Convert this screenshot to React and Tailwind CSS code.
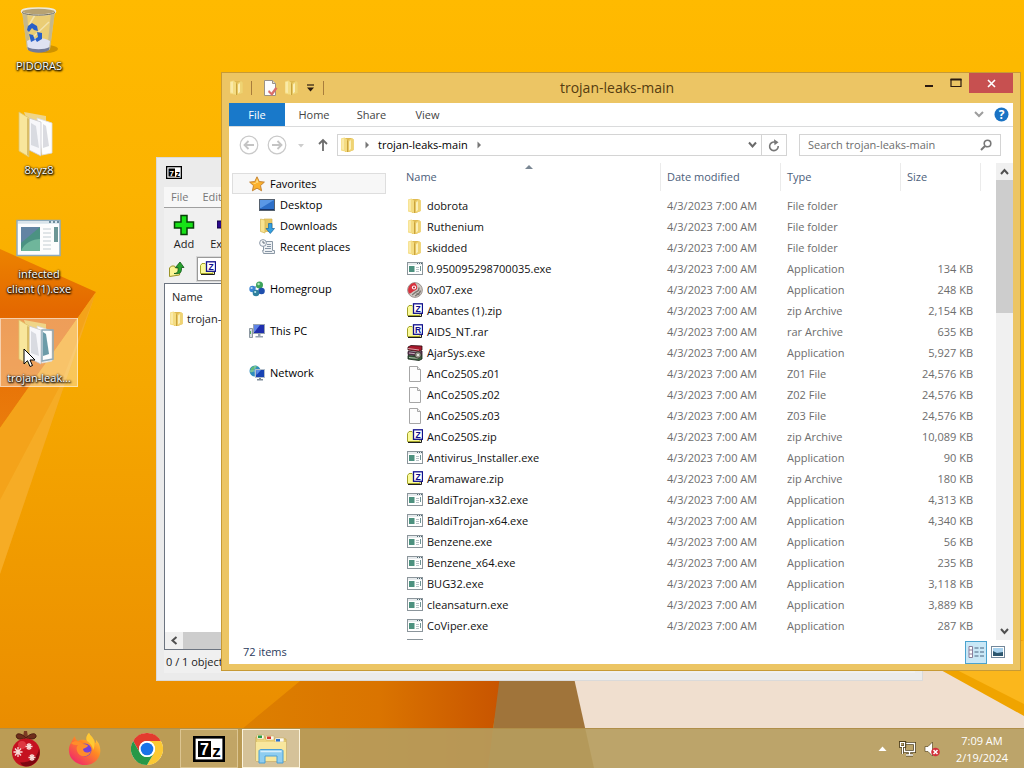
import { useState } from 'react';
import clsx from 'clsx';

const DATE = '4/3/2023 7:00 AM';

const files = [
    { name: 'dobrota', icon: 'folder', type: 'File folder', size: '' },
    { name: 'Ruthenium', icon: 'folder', type: 'File folder', size: '' },
    { name: 'skidded', icon: 'folder', type: 'File folder', size: '' },
    { name: '0.950095298700035.exe', icon: 'exe', type: 'Application', size: '134 KB' },
    { name: '0x07.exe', icon: 'disc', type: 'Application', size: '248 KB' },
    { name: 'Abantes (1).zip', icon: 'zip', type: 'zip Archive', size: '2,154 KB' },
    { name: 'AIDS_NT.rar', icon: 'rar', type: 'rar Archive', size: '635 KB' },
    { name: 'AjarSys.exe', icon: 'books', type: 'Application', size: '5,927 KB' },
    { name: 'AnCo250S.z01', icon: 'file', type: 'Z01 File', size: '24,576 KB' },
    { name: 'AnCo250S.z02', icon: 'file', type: 'Z02 File', size: '24,576 KB' },
    { name: 'AnCo250S.z03', icon: 'file', type: 'Z03 File', size: '24,576 KB' },
    { name: 'AnCo250S.zip', icon: 'zip', type: 'zip Archive', size: '10,089 KB' },
    { name: 'Antivirus_Installer.exe', icon: 'exe', type: 'Application', size: '90 KB' },
    { name: 'Aramaware.zip', icon: 'zip', type: 'zip Archive', size: '180 KB' },
    { name: 'BaldiTrojan-x32.exe', icon: 'exe', type: 'Application', size: '4,313 KB' },
    { name: 'BaldiTrojan-x64.exe', icon: 'exe', type: 'Application', size: '4,340 KB' },
    { name: 'Benzene.exe', icon: 'exe', type: 'Application', size: '56 KB' },
    { name: 'Benzene_x64.exe', icon: 'exe', type: 'Application', size: '235 KB' },
    { name: 'BUG32.exe', icon: 'exe', type: 'Application', size: '3,118 KB' },
    { name: 'cleansaturn.exe', icon: 'exe', type: 'Application', size: '3,889 KB' },
    { name: 'CoViper.exe', icon: 'exe', type: 'Application', size: '287 KB' },
];

/* ---------- small icons ---------- */

function FolderIcon() {
    return (
        <svg width="16" height="16" viewBox="0 0 16 16" className="shrink-0">
            <path d="M5 1h6l2.500 1.500V13L9 15H5z" fill="#dfba52" />
            <path d="M1 1.500 4.500.5 7 2.500V15l-6-1.500z" fill="#f4dc82" />
            <path d="M1.500 2 4 1.500V13l-2.500-.5z" fill="#faeaa8" />
            <path d="M8.500 3 12 1l1.800 1.500V13L8.500 15z" fill="#efd373" />
            <path d="M9 4.500 11 3v9l-2 1.500z" fill="#fbefb8" />
            <path d="M7.500 3.500V15" stroke="#c39c38" strokeWidth=".8" />
        </svg>
    );
}

function ExeIcon() {
    return (
        <svg width="16" height="16" viewBox="0 0 16 16" className="shrink-0">
            <rect x=".5" y="1.500" width="15" height="12" fill="#fff" stroke="#8b959b" />
            <path d="M1 3h14" stroke="#cfd8dc" />
            <path d="M10 2.500h1M12 2.500h1M14 2.500h1" stroke="#4f6872" />
            <rect x="2" y="5" width="5.500" height="6" fill="#4d917f" />
            <path d="M9 6.500h3M9 8.500h3M9 10.500h3" stroke="#b9c4c8" />
            <path d="M13.500 5v5" stroke="#6f9494" />
        </svg>
    );
}

function DiscIcon() {
    return (
        <svg width="16" height="16" viewBox="0 0 16 16" className="shrink-0">
            <circle cx="8" cy="8" r="7.400" fill="#cfc8c2" stroke="#8a827d" strokeWidth=".8" />
            <path d="M8 .8a7.200 7.200 0 0 0-6 10.700C4 12 5.500 9.500 8 8.500S11.500 5 8 .8z" fill="#d8323e" />
            <circle cx="7" cy="5.500" r="2.100" fill="#fff" />
            <circle cx="7" cy="5.500" r="1" fill="#b11c2c" />
            <path d="M5 13c2-1 3-3 5-3.500s2-2.500 2-4M8 14c2-1 5-3 5.500-5.500M9.500 11.500l3 1.500" stroke="#7c7671" strokeWidth="1.300" fill="none" />
        </svg>
    );
}

function ArchiveIcon({ letter }) {
    return (
        <svg width="16" height="16" viewBox="0 0 16 16" className="shrink-0">
            <path d="M.5 12.500v-8L2 2.500h3l1 1h7v9z" fill="#fbfb9b" stroke="#a3a32a" />
            <path d="M1 13.500h13.500V10" stroke="#1b1b1b" fill="none" />
            <rect x="6.500" y=".8" width="9" height="9.500" fill="#fff" stroke="#10108c" strokeWidth="1.300" />
            <text x="11" y="8.700" fontSize="8.500" fontWeight="700" textAnchor="middle" fill="#10108c" fontFamily="Liberation Sans, sans-serif">
                {letter}
            </text>
        </svg>
    );
}

function BooksIcon() {
    return (
        <svg width="16" height="16" viewBox="0 0 16 16" className="shrink-0">
            <path d="m1 2 3-1.500 11 .5v4l-3 1.500L1 5z" fill="#a7192c" stroke="#2b0a10" strokeWidth=".8" />
            <path d="m1 6.500 11 1 3-1.500v4l-3 1L1 9.500z" fill="#6e3a60" stroke="#21101d" strokeWidth=".8" />
            <path d="m1 10.500 11 1 3-1.500v4l-3 1.500L1 14z" fill="#3a6740" stroke="#101d12" strokeWidth=".8" />
            <path d="M1 3.500 12 5M2 8l9 1M2 12.500l9 .8" stroke="#e9dfdf" strokeWidth=".7" />
            <circle cx="11" cy="10" r="3.200" fill="#9a9a8e" stroke="#2e2e28" strokeWidth=".8" />
            <circle cx="11" cy="10" r="1" fill="#fff" />
        </svg>
    );
}

function FileIcon() {
    return (
        <svg width="16" height="16" viewBox="0 0 16 16" className="shrink-0">
            <path d="M2.500.5h8l3 3v12h-11z" fill="#fdfdfd" stroke="#a6a6a6" />
            <path d="M10.500.5v3h3" fill="#eee" stroke="#a6a6a6" />
        </svg>
    );
}

function RowIcon({ kind }) {
    if (kind === 'folder') return <FolderIcon />;
    if (kind === 'disc') return <DiscIcon />;
    if (kind === 'zip') return <ArchiveIcon letter="Z" />;
    if (kind === 'rar') return <ArchiveIcon letter="R" />;
    if (kind === 'books') return <BooksIcon />;
    if (kind === 'file') return <FileIcon />;
    return <ExeIcon />;
}

function StarIcon() {
    return (
        <svg width="16" height="16" viewBox="0 0 16 16" className="shrink-0">
            <path
                d="m8 .8 2.200 4.700 5.200.6-3.900 3.500 1.100 5.200L8 12.200l-4.600 2.600 1.100-5.200L.6 6.100l5.200-.6z"
                fill="#fbb02c"
                stroke="#c07d2d"
                strokeWidth=".9"
            />
            <path d="m8 2.500 1.500 4L3 7l3.500 1" fill="#ffe08a" />
        </svg>
    );
}

function DesktopIcon() {
    return (
        <svg width="16" height="16" viewBox="0 0 16 16" className="shrink-0">
            <rect x=".5" y="2.500" width="15" height="11" fill="#2d6fc9" stroke="#56616e" />
            <path d="M1 3h14L2 11H1z" fill="#5a98e6" />
            <path d="M1 12.500h14" stroke="#16356e" />
        </svg>
    );
}

function DownloadsIcon() {
    return (
        <svg width="16" height="16" viewBox="0 0 16 16" className="shrink-0">
            <path d="M5 1h8v12.500H5z" fill="#e6c665" stroke="#d6b450" strokeWidth=".7" />
            <path d="M1.500 1 6 2v13l-4.500-1.500z" fill="#f8e291" stroke="#d6b450" strokeWidth=".7" />
            <path d="M9.500 5.500h3.500v5h2.500l-4.200 5-4.300-5h2.500z" fill="#35a0e0" stroke="#1565a5" strokeWidth=".7" />
        </svg>
    );
}

function RecentIcon() {
    return (
        <svg width="16" height="16" viewBox="0 0 16 16" className="shrink-0">
            <path d="M4.500 2.500h9v9h2v3h-11l-1-3h1z" fill="#eef1f4" stroke="#8b98a5" />
            <path d="M8 5.500h4M8 7.500h4M6 9.500h6M6 12.500h7" stroke="#8896a5" />
            <circle cx="4" cy="4" r="3.400" fill="#f5f7f9" stroke="#8290a0" strokeWidth=".9" />
            <path d="M4 2v2h2" stroke="#566370" fill="none" strokeWidth=".9" />
        </svg>
    );
}

function HomegroupIcon() {
    return (
        <svg width="16" height="16" viewBox="0 0 16 16" className="shrink-0">
            <path d="M4 7.500 10 4l3 7.500-7 1z" fill="none" stroke="#91a6b5" strokeWidth="1.500" />
            <circle cx="3.500" cy="8" r="3.200" fill="#3b84d4" />
            <circle cx="10.500" cy="4" r="3.500" fill="#3da35b" />
            <circle cx="12.500" cy="10" r="3.300" fill="#1f4fad" />
            <circle cx="7" cy="12" r="3.300" fill="#2e7f9e" />
            <circle cx="9.600" cy="3" r="1.200" fill="#b0e6bd" />
            <circle cx="2.600" cy="7" r="1.100" fill="#b5d8f7" />
            <circle cx="6.200" cy="11" r="1.100" fill="#bfe6ee" />
        </svg>
    );
}

function PcIcon() {
    return (
        <svg width="16" height="16" viewBox="0 0 16 16" className="shrink-0">
            <path d="M.5 5.500h3v9h-3z" fill="#d6dce2" stroke="#74808d" strokeWidth=".8" />
            <path d="M1.500 8v3" stroke="#4faa5a" />
            <rect x="4.500" y="1.500" width="11" height="9" fill="#1f2fae" stroke="#9aa5b1" />
            <path d="M5 2h6L5.500 9H5z" fill="#5f84e6" />
            <path d="M9 11h2.500v2H14v1.500H6.500V13H9z" fill="#96a2af" />
        </svg>
    );
}

function NetworkIcon() {
    return (
        <svg width="16" height="16" viewBox="0 0 16 16" className="shrink-0">
            <circle cx="6" cy="6" r="5.500" fill="#2f8dbd" />
            <path d="M2 3c2-2 5-2.500 6-2 0 2-3 2-3 4S2 8 1 7z" fill="#63bb79" />
            <path d="M1 6h10M6 .5v11" stroke="#bfe2f3" strokeWidth=".5" />
            <rect x="6.500" y="4.500" width="9" height="8" fill="#1843b3" stroke="#b3bfcb" />
            <path d="M7 5h5l-4.500 5z" fill="#5d8ce6" />
            <path d="M10 13h2v1h2v1.500H8V14h2z" fill="#7f8c99" />
        </svg>
    );
}

function SevenZipLogo({ className }) {
    return (
        <svg viewBox="0 0 32 26" className={className}>
            <rect x="1.300" y="1.300" width="29.400" height="23.400" fill="#fff" stroke="#000" strokeWidth="2.600" />
            <rect x="5" y="5" width="13" height="16" fill="#000" />
            <text x="11.500" y="19" fontSize="16" fontWeight="700" textAnchor="middle" fill="#fff" fontFamily="Liberation Sans, sans-serif">
                7
            </text>
            <text x="23.500" y="21" fontSize="17" fontWeight="700" textAnchor="middle" fill="#000" fontFamily="Liberation Sans, sans-serif">
                z
            </text>
        </svg>
    );
}

/* ---------- desktop icons ---------- */

function RecycleBin() {
    return (
        <svg width="48" height="48" viewBox="0 0 48 48">
            <ellipse cx="31" cy="43" rx="12" ry="4" fill="#9d6b00" opacity=".5" />
            <path d="m7 5 5 38c4 4 20 4 23 0l5-38z" fill="#e6d08a" opacity=".85" />
            <path d="m7 5 5 38 3 2L12 6zM40 5l-5 38-3 2 4-38z" fill="#c2b68d" opacity=".9" />
            <path d="M34 16 16 33M20 9l-6 10" stroke="#f7ecc4" strokeWidth="1.500" opacity=".7" />
            <path d="M12 35c6-4 17-4 23 0l-1 8c-5 4-17 4-21 0z" fill="#dfe2f2" />
            <path d="M12.500 41c5 3 17 3 22 0l-.5 3c-5 3.500-16 3.500-21 0z" fill="#737a96" />
            <ellipse cx="23.500" cy="5.500" rx="17" ry="3.400" fill="#b7a272" stroke="#eceadf" strokeWidth="1.500" />
            <path d="M7 6.500c4 3.500 29 3.500 33 0" stroke="#6f6855" fill="none" />
            <path d="m13 20 4-3 5 3 1 5-4-1-2-2-3 4-2-2zM22 26l5 1 0 6-5 3-2-3 3-2zM14 28l4 1 2 5-4 2z" fill="#2860c8" />
        </svg>
    );
}

function BigFolder({ withWindow }) {
    return (
        <svg width="48" height="48" viewBox="0 0 48 48">
            <path d="m9 2 22 4v9l-17 2z" fill="#efd588" />
            <path d="m22 8 15 5v30l-10 2z" fill="#fdfdfd" stroke="#dcdcdc" strokeWidth=".8" />
            <path d="m14 8 12 4v34l-12-6z" fill="#f7f7fa" stroke="#c9c9cf" strokeWidth=".8" />
            <path d="m16 13 5 3 3 22-8-3z" fill="#d9dbe1" />
            <path d="m28 14 3 2 3 20-6 2z" fill={withWindow ? '#6c9ba8' : '#dadbe0'} />
            {withWindow && <path d="M27 12h11v29l-11 2z" fill="none" stroke="#90aab9" strokeWidth="1.500" />}
            <path d="M4 2 14 8v39L4 41z" fill="#f8e69c" stroke="#dfc36a" strokeWidth=".8" />
            <path d="m12 8 2 1v37l-2-1z" fill="#d9bd68" />
        </svg>
    );
}

function BigExe() {
    return (
        <svg width="48" height="48" viewBox="0 0 48 48">
            <rect x="2" y="6.500" width="43" height="35" fill="#fdfdfd" stroke="#8eabbd" strokeWidth="1.500" />
            <path d="M3 8.500h41" stroke="#d8e4eb" strokeWidth="2.500" />
            <path d="M34 8h2M38 8h2M42 8h2" stroke="#4d7183" strokeWidth="1.500" />
            <rect x="6" y="13" width="19" height="24" fill="#4b9282" />
            <path d="M6 13h19L6 29z" fill="#6284a3" />
            <path d="M6 37c3-8 12-12 19-12v12z" fill="#6fb69b" />
            <path d="M28 15h8M28 19h8M28 23h8M28 27h8M28 31h8M28 35h8" stroke="#c3cdd2" />
            <path d="M39 13h4v15h-4z" fill="#6c9695" />
        </svg>
    );
}

const shortcuts = [
    { label: 'PIDORAS', icon: <RecycleBin /> },
    { label: '8xyz8', icon: <BigFolder /> },
    { label: 'infected client (1).exe', icon: <BigExe /> },
    { label: 'trojan-leak...', icon: <BigFolder withWindow />, selected: true },
];

function Shortcuts() {
    return (
        <div className="absolute top-1.5 left-0 grid auto-rows-[104px]">
            {shortcuts.map((item) => (
                <div key={item.label}>
                    <button
                        className={clsx(
                            'flex w-[78px] flex-col items-center gap-1 border pb-px',
                            item.selected ? 'border-white/50 bg-white/35' : 'border-transparent',
                        )}
                    >
                        <span className="-mt-px h-12">{item.icon}</span>
                        <span className="px-1 text-center text-[11px] leading-[15px] text-white [text-shadow:1px_1px_2px_#000,0_1px_2px_#000,0_0_2px_#000]">
                            {item.label}
                        </span>
                    </button>
                </div>
            ))}
        </div>
    );
}

function Wallpaper() {
    return (
        <svg viewBox="0 0 1024 768" preserveAspectRatio="none" className="absolute inset-0 h-full w-full">
            <defs>
                <linearGradient id="sky" x1="0" y1="0" x2="0" y2="1">
                    <stop offset="0" stopColor="#ffba00" />
                    <stop offset=".25" stopColor="#fcb300" />
                    <stop offset=".5" stopColor="#f6a800" />
                    <stop offset=".85" stopColor="#ed9300" />
                    <stop offset="1" stopColor="#e88900" />
                </linearGradient>
                <linearGradient id="fold" x1="0" y1="0" x2="0" y2="1">
                    <stop offset="0" stopColor="#ec8300" />
                    <stop offset=".35" stopColor="#e46800" />
                    <stop offset="1" stopColor="#ea7c0c" />
                </linearGradient>
                <linearGradient id="shade" x1="0" y1="0" x2="1" y2="0">
                    <stop offset="0" stopColor="#de8300" />
                    <stop offset=".6" stopColor="#da7400" />
                    <stop offset="1" stopColor="#c85400" />
                </linearGradient>
            </defs>
            <rect width="1024" height="768" fill="url(#sky)" />
            <path d="M0 249 96 292 0 428z" fill="url(#fold)" />
            <path d="M96 292 0 428v146z" fill="#f4a31a" />
            <path d="M96 292 60 386 0 500v74z" fill="#f7b32d" opacity=".6" />
            <path d="M300 681h202l-9 47-3 40H195z" fill="url(#shade)" />
            <path d="M502 660h70l22 108H488z" fill="#a0743a" />
            <path d="M570 660h360l94 55v53H594z" fill="#f0dfcf" />
            <path d="m930 664 94 52V660z" fill="#f0a400" />
            <path d="m945 664 79 40V640z" fill="#fbb71c" />
            <path d="M1010 640h14V60h-14z" fill="#fcb900" />
        </svg>
    );
}

/* ---------- 7-Zip window ---------- */

function SevenZipWindow() {
    return (
        <section className="absolute top-[157px] right-[101px] bottom-[47px] left-[156px] flex flex-col border border-[#dadada] bg-[#ebebeb] px-[7px] pb-[7px]">
            <header className="flex h-[29px] shrink-0 items-center pl-0.5">
                <SevenZipLogo className="h-[13px] w-4" />
            </header>
            <div className="flex min-h-0 flex-1 flex-col bg-[#f0f0f0]">
                <nav className="flex h-[21px] shrink-0 items-center gap-3.5 border-b border-[#a0a0a0] bg-[#f7f7f7] pl-[7px] text-[#777]">
                    <button>File</button>
                    <button>Edit</button>
                </nav>
                <div className="flex h-[49px] shrink-0 pt-1.5">
                    <button className="flex w-10 flex-col items-center">
                        <svg width="22" height="22" viewBox="0 0 22 22">
                            <path d="M8 1.500h6v6.500h6.500v6H14v6.500H8V14H1.500V8H8z" fill="#17e217" stroke="#063f06" strokeWidth="1.500" />
                        </svg>
                        Add
                    </button>
                    <button className="flex w-12 flex-col items-center">
                        <svg width="22" height="22" viewBox="0 0 22 22">
                            <path d="M0 7h22v7H0z" fill="#2b0a8c" stroke="#12033f" />
                        </svg>
                        Extract
                    </button>
                </div>
                <div className="flex h-[26px] shrink-0 items-stretch gap-2 pb-0.5 pl-1">
                    <button aria-label="Up one level" className="w-[21px]">
                        <svg width="18" height="18" viewBox="0 0 18 18">
                            <path d="M1.500 16.500V8l2-2h3l1 2h5l-1 7z" fill="#fbf596" stroke="#9c9429" />
                            <path d="M6 13.500c5 0 4-4 4-6H7.500L12 2l4 5.500h-2.500c0 4 0 7-7.500 6z" fill="#28a12f" stroke="#0c5714" strokeWidth=".8" />
                        </svg>
                    </button>
                    <div className="flex flex-1 items-center border border-[#9a9a9a] bg-white pl-0.5 outline outline-[#d8d8d8]">
                        <ArchiveIcon letter="Z" />
                    </div>
                </div>
                <div className="flex min-h-0 flex-1 flex-col border border-[#6c7480] bg-white">
                    <div className="flex h-6 items-center pt-0.5 pl-[7px]">Name</div>
                    <div className="flex h-[22px] items-center gap-0.5 pl-1">
                        <FolderIcon />
                        trojan-leaks-main
                    </div>
                    <div className="mt-auto flex h-[17px] bg-[#f0f0f0]">
                        <button aria-label="Scroll left" className="flex w-[18px] items-center justify-center">
                            <svg width="8" height="9" viewBox="0 0 8 9">
                                <path d="M6.500 1 2.500 4.500l4 3.500" stroke="#505050" strokeWidth="2" fill="none" />
                            </svg>
                        </button>
                        <div className="w-3/4 bg-[#cdcdcd]" />
                    </div>
                </div>
                <footer className="flex h-[23px] shrink-0 items-center pl-0.5">0 / 1 object</footer>
            </div>
        </section>
    );
}

/* ---------- Explorer window ---------- */

function TitleBar() {
    return (
        <header className="flex h-[30px] shrink-0 items-start justify-between">
            <div className="flex flex-1 items-center gap-1.5 pt-1.5">
                <FolderIcon />
                <span className="h-3.5 w-px bg-[#a87d3c]" />
                <button aria-label="Properties" className="ml-1">
                    <svg width="16" height="18" viewBox="0 0 16 18">
                        <path d="M2.500 1.500h8l3 3v12h-11z" fill="#fdfdfd" stroke="#9b9284" />
                        <path d="M10.500 1.500v3h3" fill="#ddd" stroke="#9b9284" />
                        <path d="m7 11 2.500 2.500 4-5.500 2 1.500L10 17l-4-4z" fill="#d9706a" />
                    </svg>
                </button>
                <button aria-label="New folder">
                    <FolderIcon />
                </button>
                <button aria-label="Customize toolbar">
                    <svg width="9" height="8" viewBox="0 0 9 8">
                        <path d="M1 1h7" stroke="#2b1a10" strokeWidth="1.200" />
                        <path d="M1 3.500h7L4.500 7.500z" fill="#2b1a10" />
                    </svg>
                </button>
                <span className="ml-0.5 h-3.5 w-px bg-[#a87d3c]" />
            </div>
            <h1 className="pt-1 pr-2 text-[14px] leading-[22px] text-[#553c10]">trojan-leaks-main</h1>
            <div className="flex flex-1 items-start justify-end">
                <button aria-label="Minimize" className="flex h-5 w-[27px] items-center justify-center">
                    <svg width="10" height="10" viewBox="0 0 10 10">
                        <path d="M1 8h8" stroke="#2b1a10" strokeWidth="2" />
                    </svg>
                </button>
                <button aria-label="Maximize" className="flex h-5 w-[27px] items-center justify-center">
                    <svg width="12" height="10" viewBox="0 0 12 10">
                        <path d="M1 1.500h10v7H1z" stroke="#2b1a10" strokeWidth="1.200" fill="none" />
                        <path d="M.5 1.500h11" stroke="#2b1a10" strokeWidth="2" />
                    </svg>
                </button>
                <button aria-label="Close" className="flex h-5 w-11 items-center justify-center bg-[#c75050]">
                    <svg width="9" height="9" viewBox="0 0 9 9">
                        <path d="m1 1 7 7M8 1 1 8" stroke="#fff" strokeWidth="1.600" />
                    </svg>
                </button>
            </div>
        </header>
    );
}

function RibbonTabs() {
    return (
        <nav className="flex h-6 shrink-0 items-stretch border-b border-[#dadbdc] text-[#444]">
            <button className="w-14 bg-[#1979ca] text-white">File</button>
            <button className="w-[58px] pt-px">Home</button>
            <button className="w-[57px] pt-px">Share</button>
            <button className="w-[55px] pt-px">View</button>
            <button aria-label="Expand the ribbon" className="ml-auto px-2.5">
                <svg width="10" height="7" viewBox="0 0 10 7">
                    <path d="m1 1 4 4 4-4" stroke="#9d9d9d" strokeWidth="2" fill="none" />
                </svg>
            </button>
            <button aria-label="Help" className="mr-1">
                <svg width="15" height="15" viewBox="0 0 15 15">
                    <circle cx="7.500" cy="7.500" r="7" fill="#1a73c4" />
                    <text x="7.500" y="12" fontSize="12" fontWeight="700" textAnchor="middle" fill="#fff" fontFamily="Open Sans, sans-serif">
                        ?
                    </text>
                </svg>
            </button>
        </nav>
    );
}

function RoundArrow({ flip }) {
    return (
        <svg width="20" height="20" viewBox="0 0 20 20" className={flip ? 'rotate-180' : ''}>
            <circle cx="10" cy="10" r="8.800" fill="none" stroke="#c9c9c9" strokeWidth="1.200" />
            <path d="M15 10H6M9.500 6 5.500 10l4 4" stroke="#c4c4c4" strokeWidth="1.800" fill="none" />
        </svg>
    );
}

function Chevron() {
    return (
        <svg width="22" height="8" viewBox="0 0 22 8">
            <path d="M9.500.5 13 4 9.500 7.500z" fill="#767676" />
        </svg>
    );
}

function AddressRow() {
    const [search, setSearch] = useState('');

    return (
        <div className="flex h-9 shrink-0 items-center px-3 pl-2.5">
            <button aria-label="Back">
                <RoundArrow />
            </button>
            <button aria-label="Forward" className="ml-2">
                <RoundArrow flip />
            </button>
            <button aria-label="Recent locations" className="ml-2.5">
                <svg width="8" height="5" viewBox="0 0 8 5">
                    <path d="M1 1h6L4 4.500z" fill="#cdcdcd" />
                </svg>
            </button>
            <button aria-label="Up" className="ml-3">
                <svg width="12" height="14" viewBox="0 0 12 14">
                    <path d="M6 13V2M2 6l4-4 4 4" stroke="#6c6c6c" strokeWidth="1.800" fill="none" />
                </svg>
            </button>
            <div className="ml-2 flex h-[22px] flex-1 items-stretch border border-[#d4d4d4] text-black">
                <div className="flex flex-1 items-center pl-0.5">
                    <FolderIcon />
                    <Chevron />
                    <button>trojan-leaks-main</button>
                    <Chevron />
                    <button aria-label="Previous locations" className="mr-1 ml-auto">
                        <svg width="9" height="8" viewBox="0 0 9 8">
                            <path d="M1 1.500 4.500 5.500 8 1.500" stroke="#6a6a6a" strokeWidth="2" fill="none" />
                        </svg>
                    </button>
                </div>
                <button aria-label="Refresh" className="flex w-[25px] items-center justify-center border-l border-[#d4d4d4]">
                    <svg width="12" height="13" viewBox="0 0 12 13">
                        <path d="M7 3.200A4.300 4.300 0 1 0 10.200 7" stroke="#777" strokeWidth="1.600" fill="none" />
                        <path d="M6 .2 10.500 3.300 6.500 6.300z" fill="#777" />
                    </svg>
                </button>
            </div>
            <div className="ml-3 flex h-[22px] w-[202px] items-center border border-[#d4d4d4] pr-2 pl-2">
                <input
                    type="text"
                    aria-label="Search trojan-leaks-main"
                    placeholder="Search trojan-leaks-main"
                    className="min-w-0 flex-1 text-black outline-none placeholder:text-[#6d6d6d]"
                    value={search}
                    onChange={(e) => setSearch(e.target.value)}
                />
                <svg width="12" height="12" viewBox="0 0 12 12">
                    <circle cx="7.500" cy="4.500" r="3.300" stroke="#777" strokeWidth="1.600" fill="none" />
                    <path d="M5 7 1 11" stroke="#777" strokeWidth="2" />
                </svg>
            </div>
        </div>
    );
}

const groups = [
    { label: 'Homegroup', icon: <HomegroupIcon /> },
    { label: 'This PC', icon: <PcIcon /> },
    { label: 'Network', icon: <NetworkIcon /> },
];

function Sidebar() {
    return (
        <aside className="flex w-[161px] shrink-0 flex-col gap-[21px] pt-2.5 pr-1 pl-[3px] text-black">
            <div className="flex flex-col">
                <button className="flex h-[21px] items-center gap-[5px] border border-[#dedede] bg-[#f7f7f7] pl-4">
                    <StarIcon />
                    Favorites
                </button>
                <button className="flex h-[21px] items-center gap-[5px] pl-[27px]">
                    <DesktopIcon />
                    Desktop
                </button>
                <button className="flex h-[21px] items-center gap-[5px] pl-[27px]">
                    <DownloadsIcon />
                    Downloads
                </button>
                <button className="flex h-[21px] items-center gap-[5px] pl-[27px]">
                    <RecentIcon />
                    Recent places
                </button>
            </div>
            {groups.map((group) => (
                <button key={group.label} className="flex h-[21px] items-center gap-[5px] pl-[17px]">
                    {group.icon}
                    {group.label}
                </button>
            ))}
        </aside>
    );
}

function FileTable() {
    return (
        <div className="min-w-0 flex-1 overflow-hidden">
            <table className="w-full table-fixed border-collapse">
                <colgroup>
                    <col />
                    <col className="w-[120px]" />
                    <col className="w-[120px]" />
                    <col className="w-[80px]" />
                    <col className="w-[15px]" />
                </colgroup>
                <thead className="text-left text-[#4c607a]">
                    <tr className="h-8 align-top">
                        <th className="p-0 font-normal">
                            <div className="relative flex h-7 items-center border-r border-[#ebebeb] pl-4">
                                Name
                                <svg width="8" height="4" viewBox="0 0 8 4" className="absolute top-0.5 left-1/2">
                                    <path d="M0 4 4 0l4 4z" fill="#7a8794" />
                                </svg>
                            </div>
                        </th>
                        <th className="p-0 font-normal">
                            <div className="flex h-7 items-center border-r border-[#ebebeb] pl-1.5">Date modified</div>
                        </th>
                        <th className="p-0 font-normal">
                            <div className="flex h-7 items-center border-r border-[#ebebeb] pl-1.5">Type</div>
                        </th>
                        <th className="p-0 font-normal">
                            <div className="flex h-7 items-center border-r border-[#ebebeb] pl-1.5">Size</div>
                        </th>
                        <th className="p-0" />
                    </tr>
                </thead>
                <tbody className="text-[#6d6d6d]">
                    {files.map((file) => (
                        <tr key={file.name} className="h-[21px]">
                            <td className="p-0">
                                <div className="flex items-center gap-1 pl-[17px] text-[#111]">
                                    <RowIcon kind={file.icon} />
                                    {file.name}
                                </div>
                            </td>
                            <td className="p-0 pl-1.5">{DATE}</td>
                            <td className="p-0 pl-1.5">{file.type}</td>
                            <td className="p-0 pr-2 text-right">{file.size}</td>
                            <td className="p-0" />
                        </tr>
                    ))}
                    <tr className="h-[21px]">
                        <td colSpan={5} className="p-0 pt-0.5 pl-[17px] align-top">
                            <ExeIcon />
                        </td>
                    </tr>
                </tbody>
            </table>
        </div>
    );
}

function Scrollbar() {
    return (
        <div className="flex w-[17px] shrink-0 flex-col bg-[#f0f0f0]">
            <button aria-label="Scroll up" className="flex h-[17px] items-center justify-center">
                <svg width="9" height="7" viewBox="0 0 9 7">
                    <path d="M1 6 4.500 2 8 6" stroke="#505050" strokeWidth="2" fill="none" />
                </svg>
            </button>
            <div className="flex-1">
                <div className="h-[30%] bg-[#cdcdcd]" />
            </div>
            <button aria-label="Scroll down" className="flex h-[17px] items-center justify-center">
                <svg width="9" height="7" viewBox="0 0 9 7">
                    <path d="M1 1 4.500 5 8 1" stroke="#505050" strokeWidth="2" fill="none" />
                </svg>
            </button>
        </div>
    );
}

function StatusBar() {
    return (
        <footer className="flex h-6 shrink-0 items-center pr-1 pl-3.5 text-[#2b3a5c]">
            <span>72 items</span>
            <button
                aria-label="Details view"
                className="ml-auto flex h-[23px] w-[22px] items-center justify-center border border-[#4ba3cf] bg-[#c9e8f7]"
            >
                <svg width="16" height="14" viewBox="0 0 16 14">
                    <path d="M1 1.500h3.500v11H1zM1 5h3.500M1 9h3.500" stroke="#8a7f9b" fill="#fff" />
                    <path d="M6.500 3h4M12 3h4M6.500 7h4M12 7h4M6.500 11h4M12 11h4" stroke="#4a6580" />
                </svg>
            </button>
            <button aria-label="Large icons view" className="flex h-[23px] w-[22px] items-center justify-center">
                <svg width="14" height="12" viewBox="0 0 14 12">
                    <rect x=".5" y=".5" width="13" height="11" fill="#fff" stroke="#73889b" />
                    <path d="M2 2h10v8H2z" fill="#a8d2ee" />
                    <path d="m2 5 4 2 6-1v4H2z" fill="#2c566e" />
                </svg>
            </button>
        </footer>
    );
}

function ExplorerWindow() {
    return (
        <section className="absolute top-[72px] right-[3px] bottom-[57px] left-[221px] flex flex-col border border-[#c79a35] bg-[#ecc564] px-[7px] pb-1.5">
            <TitleBar />
            <div className="flex min-h-0 flex-1 flex-col bg-white">
                <RibbonTabs />
                <AddressRow />
                <div className="flex min-h-0 flex-1">
                    <Sidebar />
                    <FileTable />
                    <Scrollbar />
                </div>
                <StatusBar />
            </div>
        </section>
    );
}

/* ---------- taskbar ---------- */

function OrnamentIcon() {
    return (
        <svg width="34" height="38" viewBox="0 0 34 38">
            <path d="M15 1h3l1 6h-5z" fill="#7c3a22" />
            <path d="M17 8C12 2 5 3 8 8c2 2 6 1 9 0 3 1 8 2 10-1 1-5-6-4-10 1z" fill="#6f2e1b" stroke="#4d1d10" />
            <circle cx="17" cy="22.500" r="14" fill="#c51220" />
            <path d="M17 36.500a14 14 0 0 0 13-18c-1 8-7 14-19 14 2 3 4 4 6 4z" fill="#7f0710" />
            <circle cx="13" cy="15" r="4" fill="#ef5158" opacity=".6" />
            <path
                d="M9 17v10M4.500 22h9M6 18.500l6 7M12 18.500l-6 7M20 13v7M16.500 16.500h7M18 14l4 5M22 14l-4 5M23 24v7M19.500 27.500h7M21 25l4 5M25 25l-4 5"
                stroke="#f9dcd7"
                strokeWidth="1.300"
            />
        </svg>
    );
}

function FirefoxIcon() {
    return (
        <svg width="34" height="34" viewBox="0 0 34 34">
            <defs>
                <linearGradient id="fox" x1="1" y1="0" x2=".2" y2="1">
                    <stop offset="0" stopColor="#ffe34a" />
                    <stop offset=".45" stopColor="#ff8a22" />
                    <stop offset="1" stopColor="#f1236d" />
                </linearGradient>
            </defs>
            <path
                d="M21 1c-3 3-3 6-2 8-3-2-7-1-9 0-2-1-3-3-3-5-2 2-3 5-4 7C0 15 0 22 4 27c5 6 14 8 21 4 7-4 9-12 6-19-1-2-2-3-3-4 0 2 0 3-1 3 0-4-4-6-6-10z"
                fill="url(#fox)"
            />
            <circle cx="17" cy="18" r="6.500" fill="#7542d8" />
            <path d="M3 11c4-3 9-2 12 1 3 0 5 1 5 2-2 2-4 2-5 3 0 3 4 5 8 2-2 7-12 7-14 0-1-3 0-5 1-6-3 0-5 0-7-2z" fill="#ff8d2b" />
            <path d="M21 1c-3 3-3 6-2 8 3 2 6 5 6 9 3-5 1-10-1-13-1-1-2-2-3-4z" fill="#ffc933" />
        </svg>
    );
}

function ChromeIcon() {
    return (
        <svg width="32" height="32" viewBox="0 0 32 32">
            <circle cx="16" cy="16" r="16" fill="#fff" />
            <path d="M2.140 8A16 16 0 0 1 29.860 8H16a8 8 0 0 0-6.930 12z" fill="#e33b2e" />
            <path d="M29.860 8A16 16 0 0 1 16 32l6.930-12A8 8 0 0 0 16 8z" fill="#fcc934" />
            <path d="M16 32A16 16 0 0 1 2.140 8l6.930 12a8 8 0 0 0 13.860 0z" fill="#279847" />
            <circle cx="16" cy="16" r="8" fill="#fff" />
            <circle cx="16" cy="16" r="6.300" fill="#1a73e8" />
        </svg>
    );
}

function ExplorerIcon() {
    return (
        <svg width="32" height="30" viewBox="0 0 32 30">
            <path d="M1 3h9l1 2h20v22H1z" fill="#ecd580" stroke="#c8a94e" strokeWidth=".8" />
            <path d="M2 1h7v4H2zM11 2h8v4h-8zM20 4h9v4h-9z" fill="#fdfaf0" stroke="#c8a94e" strokeWidth=".5" />
            <path d="M3 1.500h4V4H3z" fill="#2b9a46" />
            <path d="M12 2.500h4V5h-4z" fill="#d6392e" />
            <path d="M21 5h4v2.500h-4z" fill="#2d72c9" />
            <path d="M1 8h30v19H1z" fill="#f8e79d" />
            <path d="M4 29V17c0-1 1-1.500 2-1.500h20c1 0 2 .5 2 1.500v12h-6v-7H10v7z" fill="#8ecdf0" stroke="#4a9fd4" />
            <path d="M5.500 17.500h21" stroke="#d8effb" strokeWidth="1.500" />
        </svg>
    );
}

function Taskbar() {
    return (
        <footer className="relative flex h-10 shrink-0 items-stretch gap-1 border-t border-[#b08f4a] bg-[#b69d5e]/90">
            <button aria-label="Start" className="flex w-[52px] items-center justify-center">
                <OrnamentIcon />
            </button>
            <button aria-label="Firefox" className="flex w-[58px] items-center justify-center">
                <FirefoxIcon />
            </button>
            <button aria-label="Chrome" className="flex w-[58px] items-center justify-center">
                <ChromeIcon />
            </button>
            <button aria-label="7-Zip" className="flex w-[58px] items-center justify-center border border-[#dcc592] bg-white/10">
                <SevenZipLogo className="h-[26px] w-8" />
            </button>
            <button aria-label="File Explorer" className="flex w-[58px] items-center justify-center border border-[#fbf3dc] bg-white/40">
                <ExplorerIcon />
            </button>
            <div className="ml-auto flex items-center gap-2 pr-4 text-white">
                <button aria-label="Show hidden icons">
                    <svg width="9" height="5" viewBox="0 0 9 5">
                        <path d="M.5 5 4.500.5 8.500 5z" fill="#fff" />
                    </svg>
                </button>
                <button aria-label="Network" className="ml-1">
                    <svg width="17" height="16" viewBox="0 0 17 16">
                        <path d="M5.500 2.500h10v8h-10zM10.500 10.500v3M7 14h7" stroke="#4d3d17" strokeWidth="3" fill="none" />
                        <path d="M5.500 2.500h10v8h-10zM10.500 10.500v3M7 14h7" stroke="#fff" strokeWidth="1.400" fill="none" />
                        <path d="M1 1h5v4.500H1zM3.500 5v8" stroke="#4d3d17" strokeWidth="2.400" fill="none" />
                        <path d="M1.500 1.500h4v4h-4zM3.500 5v8" stroke="#fff" strokeWidth="1.200" fill="none" />
                    </svg>
                </button>
                <button aria-label="Volume muted">
                    <svg width="16" height="16" viewBox="0 0 16 16">
                        <path d="M1 5.500h3L8.500 1v14L4 10.500H1z" fill="#fff" stroke="#5b4a22" strokeWidth=".7" />
                        <circle cx="11.500" cy="11" r="4.300" fill="#d3303a" />
                        <path d="m9.500 9 4 4M13.500 9l-4 4" stroke="#fff" strokeWidth="1.500" />
                    </svg>
                </button>
                <div className="ml-2 text-center leading-[17px]">
                    <div>7:09 AM</div>
                    <div>2/19/2024</div>
                </div>
            </div>
        </footer>
    );
}

function App() {
    return (
        <div className="relative flex h-screen flex-col overflow-hidden font-['Open_Sans','Noto_Sans',sans-serif] text-[11px] leading-4 text-[#1b1b1b] select-none">
            <Wallpaper />
            <main className="relative flex-1">
                <Shortcuts />
                <SevenZipWindow />
                <ExplorerWindow />
                <svg width="13" height="20" viewBox="0 0 13 20" className="absolute top-[348px] left-[23px]">
                    <path d="M1 1v15l3.500-3.300L7 18.500l2.500-1L7 12h5z" fill="#fff" stroke="#000" />
                </svg>
            </main>
            <Taskbar />
        </div>
    );
}

export default App;
